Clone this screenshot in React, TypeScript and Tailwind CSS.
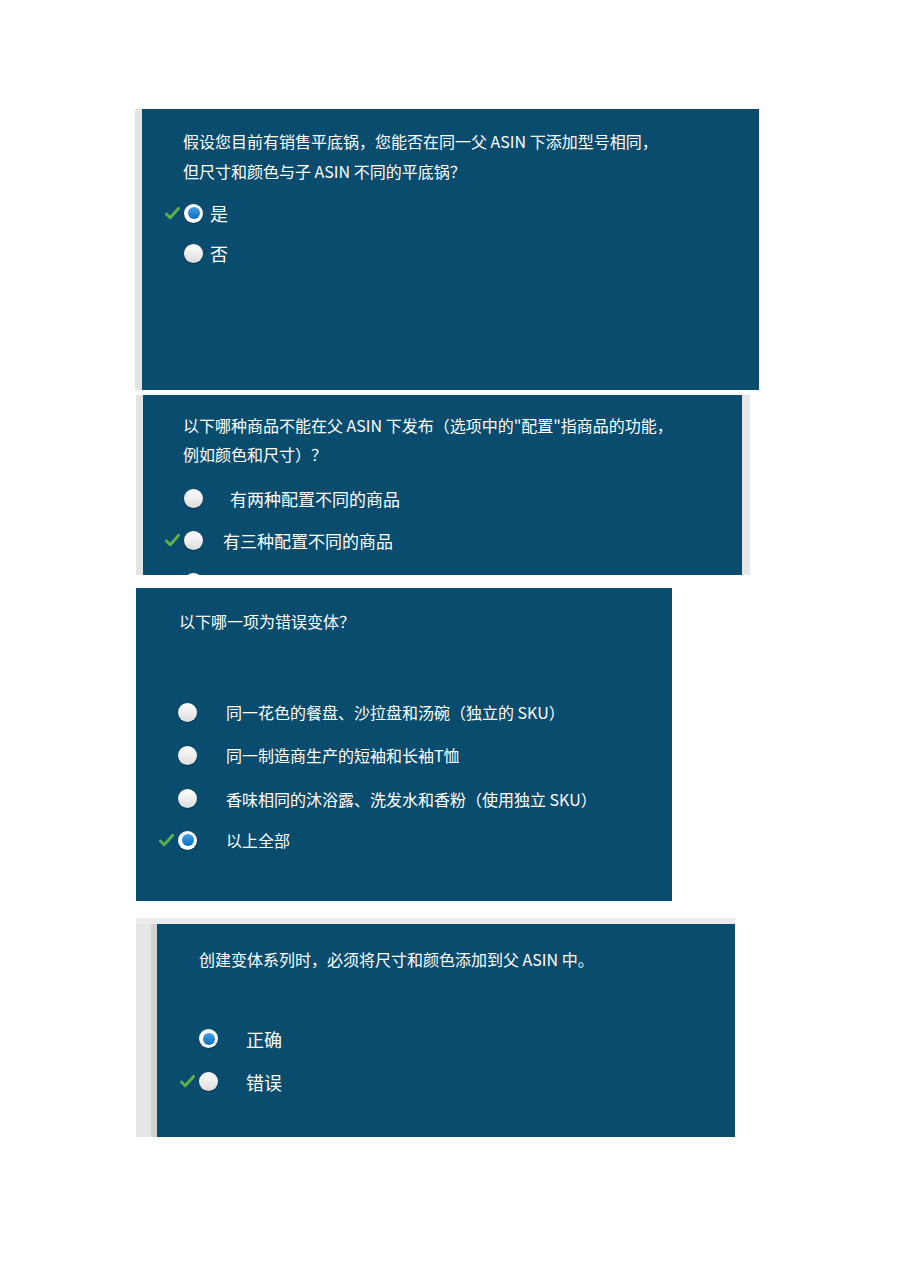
import React from 'react';

const font = { fontFamily: '"Noto Sans CJK SC", "Noto Sans", sans-serif' };

function Check() {
  return (
    <svg viewBox="0 0 16 14" className="w-[15px] h-[13px]">
      <path d="M1.5 7.5 L5.5 11.5 L14.5 1.5" fill="none" stroke="#5fb04a" strokeWidth="3.2" strokeLinecap="round" strokeLinejoin="round" />
    </svg>
  );
}

function Radio({ selected }: { selected?: boolean }) {
  if (selected) {
    return (
      <span className="w-[19px] h-[19px] rounded-full bg-white flex items-center justify-center shadow-[0_1px_1px_rgba(0,0,0,0.35)] shrink-0">
        <span className="w-[12px] h-[12px] rounded-full bg-gradient-to-b from-[#3aa0e8] to-[#0d6fb8]" />
      </span>
    );
  }
  return (
    <span className="w-[19px] h-[19px] rounded-full bg-gradient-to-b from-white to-[#dcdcdc] shadow-[0_1px_1px_rgba(0,0,0,0.35)] shrink-0" />
  );
}

interface OptionProps {
  label?: string;
  selected?: boolean;
  correct?: boolean;
  gap: string;
  text: string;
  row: string;
}

function Option({ label, selected, correct, gap, text, row }: OptionProps) {
  return (
    <div className={`flex items-center ${row}`}>
      <span className="w-[19px] flex items-center justify-start">{correct && <Check />}</span>
      <Radio selected={selected} />
      {label && <span className={`${gap} ${text} text-white leading-none`}>{label}</span>}
    </div>
  );
}

export default function App() {
  return (
    <div className="w-[900px] h-[1272px] bg-white pt-[109px]" style={font}>
      {/* 第一题 */}
      <div className="ml-[135px] w-[624px] h-[281px] flex">
        <div className="w-[7px] bg-[#e4e4e4]" />
        <div className="flex-1 bg-[#094c6e] pt-[17px]">
          <p className="pl-[41px] text-[16px] leading-[30px] text-white">
            假设您目前有销售平底锅，您能否在同一父 ASIN 下添加型号相同，
            <br />
            但尺寸和颜色与子 ASIN 不同的平底锅？
          </p>
          <div className="pl-[23px] mt-[7px]">
            <Option row="h-[40px]" gap="ml-[7px]" text="text-[18px]" label="是" selected correct />
            <Option row="h-[40px]" gap="ml-[7px]" text="text-[18px]" label="否" />
          </div>
        </div>
      </div>

      {/* 第二题 */}
      <div className="mt-[5px] ml-[136px] w-[614px] h-[180px] flex overflow-hidden">
        <div className="w-[7px] bg-[#e4e4e4]" />
        <div className="w-[599px] bg-[#094c6e] pt-[16px]">
          <p className="pl-[40px] text-[16px] leading-[29px] text-white">
            以下哪种商品不能在父 ASIN 下发布（选项中的"配置"指商品的功能，
            <br />
            例如颜色和尺寸）？
          </p>
          <div className="pl-[22px] mt-[8px]">
            <Option row="h-[42px]" gap="ml-[27px]" text="text-[17px]" label="有两种配置不同的商品" />
            <Option row="h-[42px]" gap="ml-[20px]" text="text-[17px]" label="有三种配置不同的商品" correct />
            <Option row="h-[42px]" gap="ml-[20px]" text="text-[17px]" />
          </div>
        </div>
        <div className="w-[8px] bg-[#e6e6e6]" />
      </div>

      {/* 第三题 */}
      <div className="mt-[13px] ml-[136px] w-[536px] h-[313px] bg-[#094c6e] pt-[18px]">
        <p className="pl-[43px] text-[16px] leading-[30px] text-white">以下哪一项为错误变体？</p>
        <div className="pl-[23px] mt-[55px]">
          <Option row="h-[42px]" gap="ml-[29px]" text="text-[16px]" label="同一花色的餐盘、沙拉盘和汤碗（独立的 SKU）" />
          <Option row="h-[44px]" gap="ml-[29px]" text="text-[16px]" label="同一制造商生产的短袖和长袖T恤" />
          <Option row="h-[43px]" gap="ml-[29px]" text="text-[16px]" label="香味相同的沐浴露、洗发水和香粉（使用独立 SKU）" />
          <Option row="h-[40px]" gap="ml-[29px]" text="text-[16px]" label="以上全部" selected correct />
        </div>
      </div>

      {/* 第四题 */}
      <div className="mt-[17px] ml-[136px] w-[599px]">
        <div className="h-[6px] bg-[#ececec]" />
        <div className="h-[213px] flex">
          <div className="w-[15px] bg-[#e6e6e6]" />
          <div className="w-[6px] bg-[#d2d2d2]" />
          <div className="flex-1 bg-[#094c6e] pt-[20px]">
            <p className="pl-[42px] text-[16px] leading-[30px] text-white">创建变体系列时，必须将尺寸和颜色添加到父 ASIN 中。</p>
            <div className="pl-[23px] mt-[43px]">
              <Option row="h-[43px]" gap="ml-[28px]" text="text-[18px]" label="正确" selected />
              <Option row="h-[43px]" gap="ml-[28px]" text="text-[18px]" label="错误" correct />
            </div>
          </div>
        </div>
      </div>
    </div>
  );
}
